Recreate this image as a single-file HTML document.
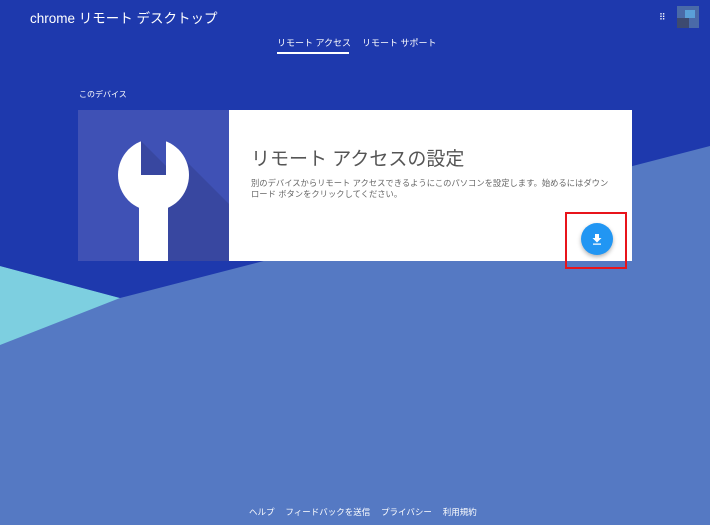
<!DOCTYPE html>
<html><head><meta charset="utf-8"><style>
*{margin:0;padding:0;box-sizing:border-box}
body{width:710px;height:525px;overflow:hidden;position:relative;background:#5477c2;font-family:"Liberation Sans","Noto Sans CJK JP",sans-serif}
.t{position:absolute;white-space:nowrap}
</style></head><body>
<svg width="710" height="525" style="position:absolute;left:0;top:0">
<rect width="710" height="525" fill="#5579c3"/>
<polygon points="0,266 120,298 0,345" fill="#7dcfe0"/>
<polygon points="0,0 710,0 710,146 120,298 0,266" fill="#1e39ad"/>
</svg>
<div class="t" style="left:30px;top:7px;color:#fff;font-size:13.5px">chrome リモート デスクトップ</div>
<div class="t" style="left:659px;top:12px;color:#fff;font-size:9px;letter-spacing:-1px">⠿</div>
<div style="position:absolute;left:677px;top:6px;width:22px;height:22px;background:#4a6aa8"><div style="position:absolute;left:8px;top:4px;width:10px;height:8px;background:#5aa0d8"></div><div style="position:absolute;left:0;top:12px;width:12px;height:10px;background:#3d4a70"></div></div>
<div class="t" style="left:277px;top:36px;color:#fff;font-size:9px">リモート アクセス</div>
<div class="t" style="left:362px;top:36px;color:#fff;font-size:9px">リモート サポート</div>
<div style="position:absolute;left:277px;top:52px;width:72px;height:2px;background:#fff"></div>
<div class="t" style="left:79px;top:89px;color:#fff;font-size:8px">このデバイス</div>
<div style="position:absolute;left:78px;top:110px;width:554px;height:151px;background:#fff"></div>
<svg width="151" height="151" style="position:absolute;left:78px;top:110px">
<rect width="151" height="151" fill="#3f51b5"/>
<polygon points="88,31 151,94 151,151 90,151 90,100 75,100" fill="#3847a0"/>
<ellipse cx="75.5" cy="65" rx="35.5" ry="36" fill="#fff"/>
<rect x="61" y="90" width="29" height="61" fill="#fff"/>
<rect x="63" y="28" width="25" height="37" fill="#3f51b5"/>
<polygon points="63,31 88,56 88,65 63,65" fill="#3847a0"/>
</svg>
<div class="t" style="left:251px;top:144px;color:#555;font-size:19px">リモート アクセスの設定</div>
<div class="t" style="left:251px;top:178px;color:#666;font-size:8.3px;line-height:11px">別のデバイスからリモート アクセスできるようにこのパソコンを設定します。始めるにはダウン<br>ロード ボタンをクリックしてください。</div>
<div style="position:absolute;left:581px;top:223px;width:32px;height:32px;border-radius:50%;background:#2196f3;box-shadow:0 2px 4px rgba(0,0,0,.3)"></div>
<svg width="12" height="12" style="position:absolute;left:591px;top:233px"><path d="M4 1h4v4h2.5L6 9.5 1.5 5H4z M2 10.5h8v1.2H2z" fill="#fff"/></svg>
<div style="position:absolute;left:565px;top:212px;width:62px;height:57px;border:2px solid #e8141b"></div>
<div class="t" style="left:249px;top:506px;color:#fff;font-size:8.5px">ヘルプ　 フィードバックを送信　 プライバシー　 利用規約</div>
</body></html>
